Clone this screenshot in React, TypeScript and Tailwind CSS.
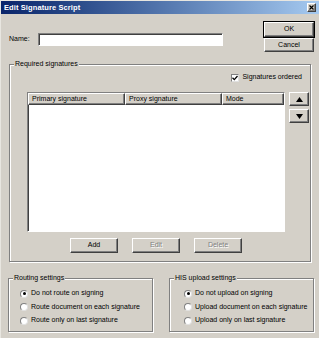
import React from "react";

const raised =
  "border border-t-white border-l-white border-r-[#404040] border-b-[#404040] shadow-[inset_-1px_-1px_0_#808080]";
const sunken =
  "border border-t-[#808080] border-l-[#808080] border-r-white border-b-white shadow-[inset_1px_1px_0_#404040]";
const etched =
  "border border-[#808080] shadow-[inset_1px_1px_0_#ffffff,1px_1px_0_#ffffff]";

function Btn({ label, w, h, disabled, def }: { label: string; w: string; h: string; disabled?: boolean; def?: boolean }) {
  return (
    <div
      className={`${w} ${h} ${def ? "outline outline-1 outline-black" : ""} ${raised} bg-[#d4d0c8] flex items-center justify-center ${
        disabled ? "text-[#808080] [text-shadow:1px_1px_0_#fff]" : "text-black"
      }`}
    >
      {label}
    </div>
  );
}

function Radio({ label, checked }: { label: string; checked?: boolean }) {
  return (
    <div className="flex items-center h-[9px]">
      <div className="w-[8px] h-[8px] rounded-full bg-white border border-t-[#808080] border-l-[#808080] border-r-[#e0e0e0] border-b-[#e0e0e0] flex items-center justify-center">
        {checked && <div className="w-[3px] h-[3px] rounded-full bg-black" />}
      </div>
      <span className="ml-[3px]">{label}</span>
    </div>
  );
}

function Group({ title, className, children }: { title: string; className: string; children?: React.ReactNode }) {
  return (
    <div className={`relative ${etched} ${className}`}>
      <div className="absolute -top-[6px] left-[4px] px-[1px] bg-[#d4d0c8] leading-[10px]">{title}</div>
      {children}
    </div>
  );
}

export default function App() {
  return (
    <div className="w-[319px] h-[338px] bg-[#d4d0c8] flex flex-col font-['Liberation_Sans',Arial,sans-serif] text-[7px] text-black overflow-hidden border-l border-t border-l-[#e8e6e0] border-t-[#e8e6e0]">
      {/* Title bar */}
      <div className="h-[13px] shrink-0 flex items-center pl-[3px] pr-[3px] bg-gradient-to-r from-[#0a246a] to-[#a6caf0]">
        <span className="text-white font-bold text-[7.5px] tracking-[0.1px]">Edit Signature Script</span>
        <div className={`ml-auto w-[9px] h-[9px] ${raised} bg-[#d4d0c8] flex items-center justify-center`}>
          <svg width="5" height="5" viewBox="0 0 5 5">
            <path d="M0.5 0.5L4.5 4.5M4.5 0.5L0.5 4.5" stroke="#000" strokeWidth="1.2" />
          </svg>
        </div>
      </div>

      {/* Top row */}
      <div className="flex pt-[8px]">
        <div className="ml-[8px] mt-[11px] flex items-center h-[13px]">
          <span className="w-[29px]">Name:</span>
          <div className={`w-[185px] h-[13px] bg-white ${sunken}`} />
        </div>
        <div className="ml-auto mr-[5px] flex flex-col gap-[1px]">
          <Btn label="OK" w="w-[50px]" h="h-[15px]" def />
          <Btn label="Cancel" w="w-[50px]" h="h-[14px]" />
        </div>
      </div>

      {/* Required signatures */}
      <Group title="Required signatures" className="mt-[12px] mx-[8px] h-[198px] flex flex-col">
        <div className="pt-[8px] flex justify-end pr-[8px]">
          <div className="flex items-center h-[9px]">
            <div className="w-[8px] h-[8px] bg-white border border-t-[#808080] border-l-[#808080] border-r-[#e0e0e0] border-b-[#e0e0e0] flex items-center justify-center">
              <svg width="6" height="6" viewBox="0 0 6 6">
                <path d="M0.5 2.8L2.3 4.6L5.5 1" stroke="#000" strokeWidth="1.3" fill="none" />
              </svg>
            </div>
            <span className="ml-[3px]">Signatures ordered</span>
          </div>
        </div>
        <div className="flex mt-[10px] pl-[17px]">
          <div className={`w-[258px] h-[140px] bg-white ${sunken} flex flex-col`}>
            <div className="flex h-[12px] shrink-0 bg-[#d4d0c8]">
              <div className={`w-[97px] ${raised} flex items-center pl-[3px]`}>Primary signature</div>
              <div className={`w-[97px] ${raised} flex items-center pl-[3px]`}>Proxy signature</div>
              <div className={`flex-1 ${raised} flex items-center pl-[3px]`}>Mode</div>
            </div>
          </div>
          <div className="ml-[4px] flex flex-col gap-[3px]">
            <div className={`w-[20px] h-[14px] ${raised} bg-[#d4d0c8] flex items-center justify-center`}>
              <svg width="7" height="5" viewBox="0 0 7 5">
                <path d="M3.5 0L7 5H0Z" fill="#000" />
              </svg>
            </div>
            <div className={`w-[20px] h-[14px] ${raised} bg-[#d4d0c8] flex items-center justify-center`}>
              <svg width="7" height="5" viewBox="0 0 7 5">
                <path d="M0 0H7L3.5 5Z" fill="#000" />
              </svg>
            </div>
          </div>
        </div>
        <div className="flex mt-[6px] pl-[60px] gap-[14px]">
          <Btn label="Add" w="w-[48px]" h="h-[15px]" />
          <Btn label="Edit" w="w-[48px]" h="h-[15px]" disabled />
          <Btn label="Delete" w="w-[48px]" h="h-[15px]" disabled />
        </div>
      </Group>

      {/* Bottom groups */}
      <div className="flex mt-[16px] ml-[7px] gap-[16px]">
        <Group title="Routing settings" className="w-[145px] h-[54px] flex flex-col pt-[10px] pl-[11px] gap-[4.5px]">
          <Radio label="Do not route on signing" checked />
          <Radio label="Route document on each signature" />
          <Radio label="Route only on last signature" />
        </Group>
        <Group title="HIS upload settings" className="w-[145px] h-[54px] flex flex-col pt-[10px] pl-[14px] gap-[4.5px]">
          <Radio label="Do not upload on signing" checked />
          <Radio label="Upload document on each signature" />
          <Radio label="Upload only on last signature" />
        </Group>
      </div>
    </div>
  );
}
